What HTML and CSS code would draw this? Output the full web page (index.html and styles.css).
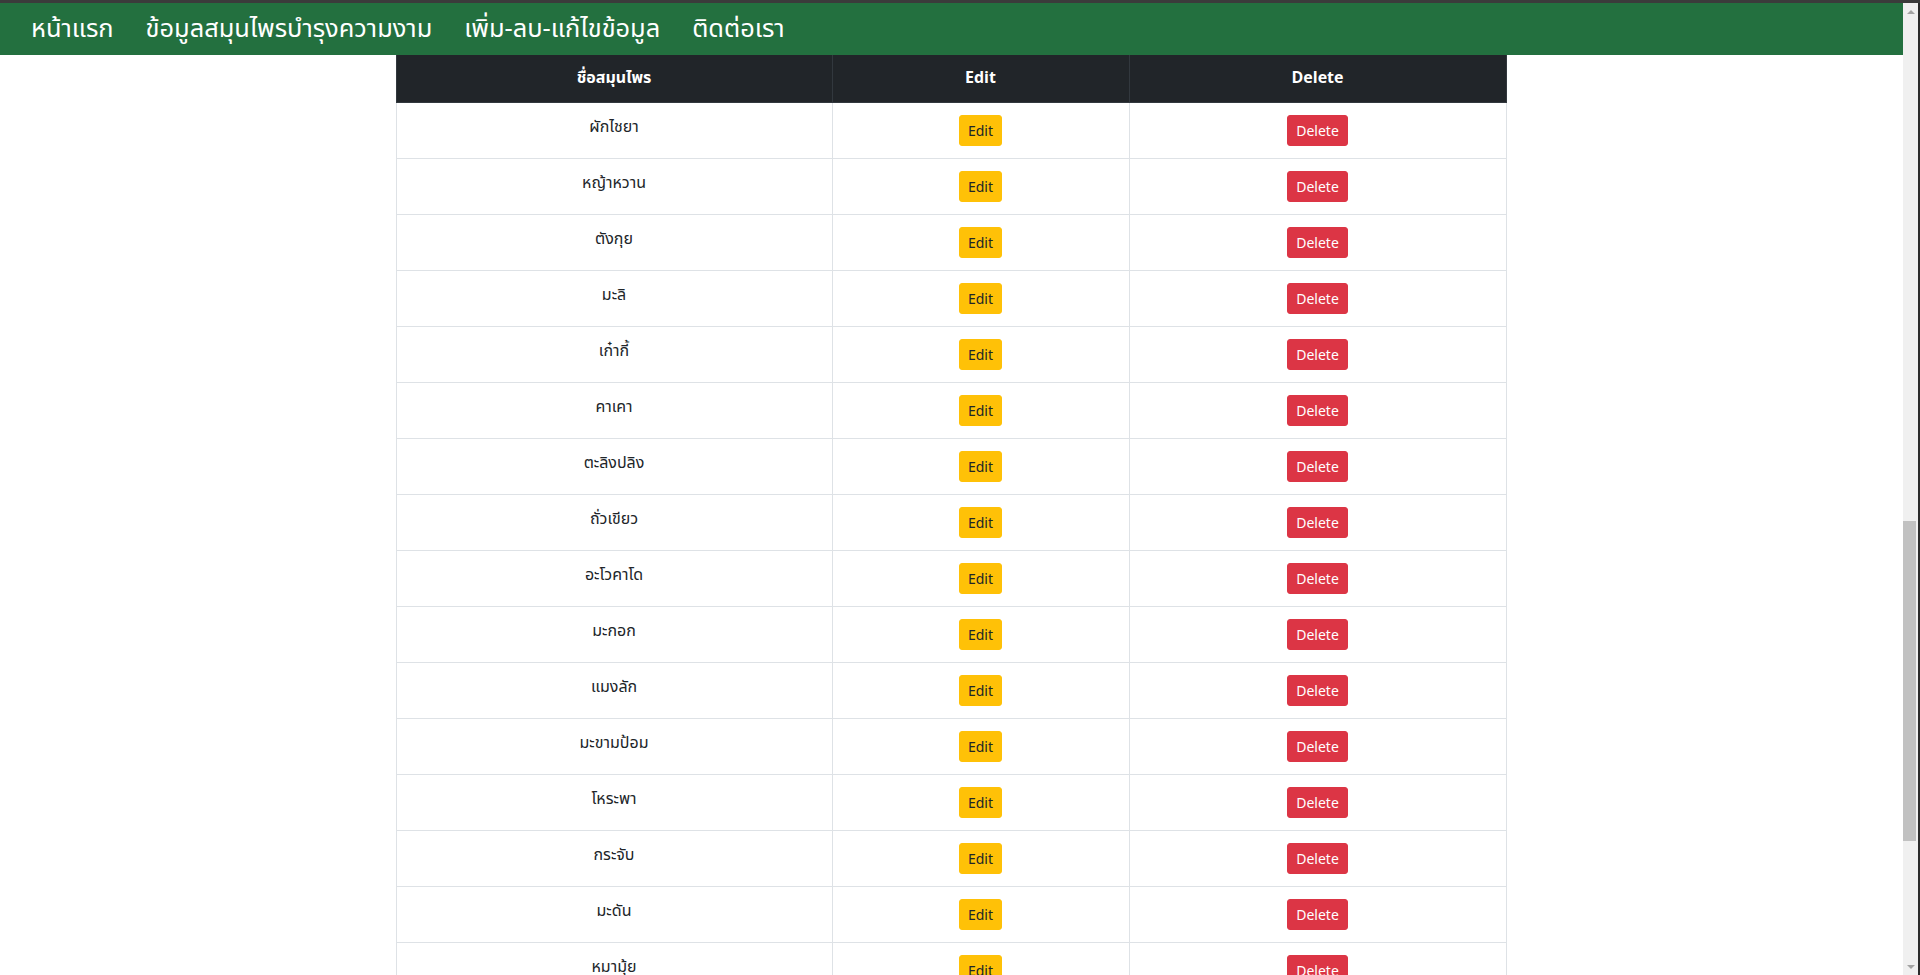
FILE: index.html
```html
<!DOCTYPE html>
<html lang="th">
<head>
<meta charset="utf-8">
<title>สมุนไพรบำรุงความงาม</title>
<link rel="stylesheet" href="styles.css">
</head>
<body>
<div class="topline"></div>
<div class="window">
  <div class="page">
    <nav class="navbar">
      <a class="nav-link" href="#">หน้าแรก</a>
      <a class="nav-link" href="#">ข้อมูลสมุนไพรบำรุงความงาม</a>
      <a class="nav-link" href="#">เพิ่ม-ลบ-แก้ไขข้อมูล</a>
      <a class="nav-link" href="#">ติดต่อเรา</a>
    </nav>
    <div class="container">
      <table class="table">
        <colgroup>
          <col class="c1"><col class="c2"><col class="c3">
        </colgroup>
        <thead>
          <tr><th>ชื่อสมุนไพร</th><th>Edit</th><th>Delete</th></tr>
        </thead>
        <tbody>
          <tr><td>ผักไชยา</td><td><a class="btn btn-edit">Edit</a></td><td><a class="btn btn-del">Delete</a></td></tr>
          <tr><td>หญ้าหวาน</td><td><a class="btn btn-edit">Edit</a></td><td><a class="btn btn-del">Delete</a></td></tr>
          <tr><td>ตังกุย</td><td><a class="btn btn-edit">Edit</a></td><td><a class="btn btn-del">Delete</a></td></tr>
          <tr><td>มะลิ</td><td><a class="btn btn-edit">Edit</a></td><td><a class="btn btn-del">Delete</a></td></tr>
          <tr><td>เก๋ากี้</td><td><a class="btn btn-edit">Edit</a></td><td><a class="btn btn-del">Delete</a></td></tr>
          <tr><td>คาเคา</td><td><a class="btn btn-edit">Edit</a></td><td><a class="btn btn-del">Delete</a></td></tr>
          <tr><td>ตะลิงปลิง</td><td><a class="btn btn-edit">Edit</a></td><td><a class="btn btn-del">Delete</a></td></tr>
          <tr><td>ถั่วเขียว</td><td><a class="btn btn-edit">Edit</a></td><td><a class="btn btn-del">Delete</a></td></tr>
          <tr><td>อะโวคาโด</td><td><a class="btn btn-edit">Edit</a></td><td><a class="btn btn-del">Delete</a></td></tr>
          <tr><td>มะกอก</td><td><a class="btn btn-edit">Edit</a></td><td><a class="btn btn-del">Delete</a></td></tr>
          <tr><td>แมงลัก</td><td><a class="btn btn-edit">Edit</a></td><td><a class="btn btn-del">Delete</a></td></tr>
          <tr><td>มะขามป้อม</td><td><a class="btn btn-edit">Edit</a></td><td><a class="btn btn-del">Delete</a></td></tr>
          <tr><td>โหระพา</td><td><a class="btn btn-edit">Edit</a></td><td><a class="btn btn-del">Delete</a></td></tr>
          <tr><td>กระจับ</td><td><a class="btn btn-edit">Edit</a></td><td><a class="btn btn-del">Delete</a></td></tr>
          <tr><td>มะดัน</td><td><a class="btn btn-edit">Edit</a></td><td><a class="btn btn-del">Delete</a></td></tr>
          <tr><td>หมามุ้ย</td><td><a class="btn btn-edit">Edit</a></td><td><a class="btn btn-del">Delete</a></td></tr>
        </tbody>
      </table>
    </div>
  </div>
  <div class="scrollbar">
    <div class="sb-arrow sb-up"></div>
    <div class="sb-track">
      <div class="sb-space-top"></div>
      <div class="sb-thumb"></div>
    </div>
    <div class="sb-arrow sb-down"></div>
  </div>
</div>
</body>
</html>
```

FILE: styles.css
```css
* { box-sizing: border-box; }

html, body {
  margin: 0;
  padding: 0;
  height: 975px;
  overflow: hidden;
  background: #ffffff;
}

body {
  font-family: "Noto Sans Thai", "Noto Sans", "DejaVu Sans", sans-serif;
  font-size: 16px;
  line-height: 1.5;
  color: #212529;
  display: flex;
  flex-direction: column;
}

.topline {
  height: 3px;
  background: #3b3b3b;
  flex: none;
}

.window {
  flex: 1;
  display: flex;
  min-height: 0;
}

.page {
  flex: 1;
  min-width: 0;
  overflow: hidden;
  display: flex;
  flex-direction: column;
}

.navbar {
  flex: none;
  height: 52px;
  background: #23703f;
  display: flex;
  align-items: center;
  padding: 0 15px;
}

.nav-link {
  color: #ffffff;
  text-decoration: none;
  font-size: 25.4px;
  line-height: 1;
  padding: 2px 16px 0;
}

.container {
  width: 1140px;
  margin: 0 auto;
  padding: 0 16px 0 14px;
}

.table {
  width: 1110px;
  border-collapse: collapse;
  table-layout: fixed;
}

.c1 { width: 436px; }
.c2 { width: 297px; }
.c3 { width: 377px; }

.table th,
.table td {
  text-align: center;
  vertical-align: top;
  padding: 12px;
}

.table thead th {
  background: #212529;
  color: #ffffff;
  font-weight: 700;
  border: 1px solid #32383e;
  border-top: none;
  padding: 11px 12px 12px;
}

.table tbody td {
  border: 1px solid #dee2e6;
  height: 56px;
}

.btn {
  display: inline-block;
  font-size: 14px;
  line-height: 21px;
  padding: 4px 8px;
  border: 1px solid transparent;
  border-radius: 3px;
  text-decoration: none;
  font-family: "Noto Sans", "Open Sans", sans-serif;
}

.btn-edit {
  background: #ffc107;
  border-color: #ffc107;
  color: #212529;
}

.btn-del {
  background: #dc3545;
  border-color: #dc3545;
  color: #ffffff;
}

.scrollbar {
  flex: none;
  width: 17px;
  background: #f0f0f0;
  border-right: 2px solid #2b2b2b;
  display: flex;
  flex-direction: column;
}

.sb-arrow {
  flex: none;
  height: 17px;
  display: flex;
  align-items: center;
  justify-content: center;
}

.sb-up::before {
  content: "";
  border-left: 4px solid transparent;
  border-right: 4px solid transparent;
  border-bottom: 4px solid #a3a3a3;
}

.sb-down::before {
  content: "";
  border-left: 4px solid transparent;
  border-right: 4px solid transparent;
  border-top: 4px solid #a3a3a3;
}

.sb-track {
  flex: 1;
  display: flex;
  flex-direction: column;
  align-items: center;
}

.sb-space-top {
  height: 501px;
  flex: none;
}

.sb-thumb {
  width: 13px;
  height: 320px;
  background: #c1c1c1;
  margin-right: 2px;
}
```
